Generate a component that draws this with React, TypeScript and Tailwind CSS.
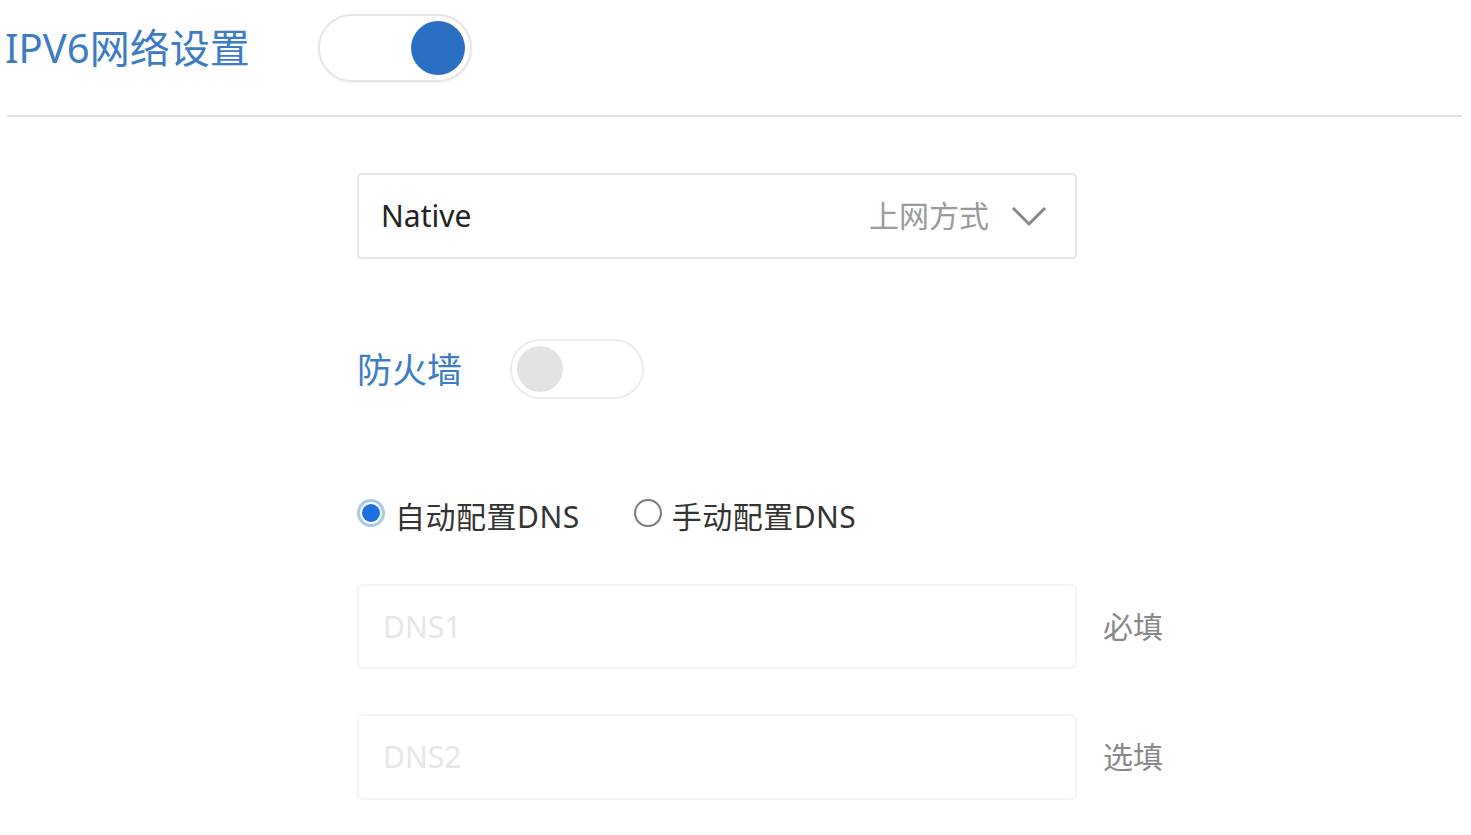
import React, { useState } from 'react';

const font = { fontFamily: '"Noto Sans", "Noto Sans CJK SC", sans-serif' };

function Toggle({ on, big }: { on: boolean; big?: boolean }) {
  if (big) {
    return (
      <div className="w-[154px] h-[68px] rounded-full border-2 border-[#e6e6e6] bg-white flex items-center justify-end pr-[5px] shadow-[0_1px_2px_rgba(0,0,0,0.06)]">
        <div className={`w-[54px] h-[54px] rounded-full ${on ? 'bg-[#2a6fc2]' : 'bg-[#e0e0e0]'}`} />
      </div>
    );
  }
  return (
    <div className="w-[134px] h-[60px] rounded-full border-2 border-[#ececec] bg-white flex items-center pl-[5px]">
      <div className="w-[46px] h-[46px] rounded-full bg-[#e3e3e3]" />
    </div>
  );
}

function Radio({ checked, label, onClick }: { checked: boolean; label: string; onClick: () => void }) {
  return (
    <button onClick={onClick} className="flex items-center gap-[10px]">
      {checked ? (
        <span className="w-[28px] h-[28px] rounded-full border-[3px] border-[#a9c8ee] bg-white flex items-center justify-center">
          <span className="w-[18px] h-[18px] rounded-full bg-[#1d6fe3]" />
        </span>
      ) : (
        <span className="w-[28px] h-[28px] rounded-full border-2 border-[#7a7a7a] bg-white" />
      )}
      <span className="text-[30px] leading-none text-[#333] mt-[8px] tracking-[0.5px]">{label}</span>
    </button>
  );
}

export default function App() {
  const [auto, setAuto] = useState(true);

  return (
    <div className="w-[1471px] h-[835px] bg-white overflow-hidden" style={font}>
      {/* Header */}
      <div className="flex items-center h-[96px] pl-[5px]">
        <h1 className="text-[40px] leading-none text-[#3b7cc4]">IPV6网络设置</h1>
        <div className="ml-[68px]">
          <Toggle on big />
        </div>
      </div>
      <div className="h-[2px] bg-[#e2e2e2] mt-[19px] ml-[7px] w-[1455px]" />

      <div className="pl-[357px]">
        {/* Dropdown */}
        <div className="mt-[56px] w-[720px] h-[86px] border-2 border-[#e6e6e6] rounded-[5px] flex items-center pl-[22px] pr-[28px] shadow-[0_1px_2px_rgba(0,0,0,0.04)]">
          <span className="text-[30px] leading-none text-[#222]">Native</span>
          <span className="ml-auto text-[30px] leading-none text-[#9a9a9a]">上网方式</span>
          <svg className="ml-[22px]" width="36" height="22" viewBox="0 0 36 22" fill="none">
            <path d="M2 3 L18 19 L34 3" stroke="#888" strokeWidth="3" />
          </svg>
        </div>

        {/* Firewall */}
        <div className="mt-[80px] flex items-center h-[60px]">
          <span className="text-[35px] leading-none text-[#3b7cc4]">防火墙</span>
          <div className="ml-[48px]">
            <Toggle on={false} />
          </div>
        </div>

        {/* Radios */}
        <div className="mt-[97px] flex items-center gap-[54px] h-[34px]">
          <Radio checked={auto} label="自动配置DNS" onClick={() => setAuto(true)} />
          <Radio checked={!auto} label="手动配置DNS" onClick={() => setAuto(false)} />
        </div>

        {/* DNS inputs */}
        <div className="mt-[54px] flex items-center">
          <div className="w-[720px] h-[85px] border-2 border-[#f4f4f4] rounded-[6px] flex items-center pl-[24px]">
            <span className="text-[30px] leading-none text-[#e6e6e6]">DNS1</span>
          </div>
          <span className="ml-[26px] text-[30px] leading-none text-[#888]">必填</span>
        </div>
        <div className="mt-[45px] flex items-center">
          <div className="w-[720px] h-[86px] border-2 border-[#f4f4f4] rounded-[6px] flex items-center pl-[24px]">
            <span className="text-[30px] leading-none text-[#e6e6e6]">DNS2</span>
          </div>
          <span className="ml-[26px] text-[30px] leading-none text-[#888]">选填</span>
        </div>
      </div>
    </div>
  );
}
